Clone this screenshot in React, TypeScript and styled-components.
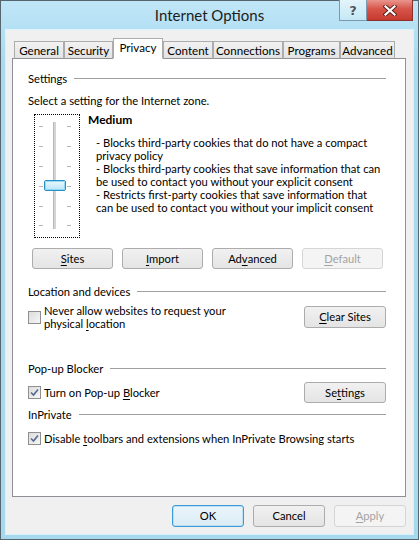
import React from 'react';
import styled, { createGlobalStyle } from 'styled-components';

const Global = createGlobalStyle`
  html, body { margin: 0; padding: 0; background: #fff; }
  body {
    font-family: Lato, "Segoe UI", sans-serif;
    font-size: 11.2px;
    color: #000;
  }
`;

const Window = styled.div`
  box-sizing: border-box;
  width: 419px;
  height: 540px;
  border: 1px solid #55666f;
  background: linear-gradient(#bfe6f7, #a9daf0 60px, #a6d8ee);
  padding: 0 5px 5px 5px;
  display: flex;
  flex-direction: column;
`;

const TitleBar = styled.div`
  height: 29px;
  display: grid;
  grid-template-columns: 1fr auto 1fr;
  align-items: start;
`;

const Title = styled.div`
  grid-column: 2;
  font-size: 15px;
  line-height: 29px;
  color: #1c1c1c;
  white-space: nowrap;
`;

const CaptionButtons = styled.div`
  grid-column: 3;
  justify-self: end;
  display: flex;
  margin-top: -1px;
`;

const CaptionButton = styled.div<{ $close?: boolean }>`
  box-sizing: border-box;
  height: 21px;
  width: ${p => (p.$close ? 46 : 28)}px;
  display: flex;
  align-items: center;
  justify-content: center;
  border: 1px solid ${p => (p.$close ? '#8b3129' : '#7c9aab')};
  border-top: none;
  background: ${p =>
    p.$close
      ? 'linear-gradient(#e9958e, #d65449 45%, #c73b2f)'
      : 'linear-gradient(#e3f4fb, #c4e8f6)'};
  & + & {
    border-left: none;
  }
`;

const HelpGlyph = styled.span`
  font-family: "DejaVu Sans", sans-serif;
  font-weight: bold;
  font-size: 13px;
  line-height: 1;
  color: #4a5560;
  text-shadow: 0 0 1px #fff, 0 0 1px #fff;
`;

const Client = styled.div`
  flex: 1;
  background: #f0f0f0;
  box-shadow: 0 0 0 1px rgba(230, 246, 252, 0.8);
  display: flex;
  flex-direction: column;
  padding: 8px 7px 0 6px;
  min-height: 0;
`;

const TabStrip = styled.div`
  position: relative;
  z-index: 1;
  height: 21px;
  margin-bottom: -1px;
  padding-left: 2px;
  display: flex;
  align-items: flex-end;
`;

const Tab = styled.div<{ $w: number; $active?: boolean }>`
  box-sizing: border-box;
  width: ${p => p.$w}px;
  height: ${p => (p.$active ? 21 : 18)}px;
  border: 1px solid #acacac;
  border-bottom: 1px solid ${p => (p.$active ? '#fff' : '#8e9095')};
  background: ${p => (p.$active ? '#fff' : 'linear-gradient(#f2f2f2, #e3e3e3)')};
  display: flex;
  align-items: center;
  justify-content: center;
  padding-bottom: ${p => (p.$active ? 3 : 0)}px;
  font-size: 11.6px;
  white-space: nowrap;
`;

const Panel = styled.div`
  flex: 1;
  border: 1px solid #8e9095;
  background: #fff;
  padding: 0 19px 0 15px;
  display: flex;
  flex-direction: column;
`;

const SectionHeader = styled.div<{ $mt: number }>`
  margin-top: ${p => p.$mt}px;
  display: flex;
  align-items: center;
  line-height: 15px;
  white-space: nowrap;
  &::after {
    content: '';
    flex: 1;
    height: 1px;
    background: #a0a0a0;
    margin-left: 7px;
  }
`;

const Line = styled.div<{ $mt: number }>`
  margin-top: ${p => p.$mt}px;
  line-height: 15px;
  white-space: nowrap;
`;

const SliderRow = styled.div`
  margin-top: 6px;
  display: flex;
  align-items: flex-start;
`;

const SliderBox = styled.div`
  box-sizing: border-box;
  width: 46px;
  height: 124px;
  margin-left: 6px;
  border: 1px dotted #000;
  display: flex;
`;

const LevelInfo = styled.div`
  margin-left: 8px;
  display: flex;
  flex-direction: column;
`;

const LevelName = styled.div`
  font-weight: bold;
  font-size: 12px;
  line-height: 14px;
  margin-top: -1px;
`;

const Description = styled.div`
  margin-top: 9px;
  margin-left: 8px;
  line-height: 13px;
  white-space: nowrap;
`;

const ButtonRow = styled.div`
  margin-top: 10px;
  margin-left: 4px;
  display: flex;
  gap: 9px;
`;

const Button = styled.div<{ $w: number; $h?: number; $disabled?: boolean; $default?: boolean }>`
  box-sizing: border-box;
  width: ${p => p.$w}px;
  height: ${p => p.$h ?? 21}px;
  border: 1px solid ${p => (p.$disabled ? '#d5d5d5' : p.$default ? '#3c9bd6' : '#acacac')};
  border-radius: 3px;
  background: ${p =>
    p.$disabled ? '#f4f4f4' : p.$default ? 'linear-gradient(#eaf5fb, #dcecf5)' : 'linear-gradient(#f1f1f1, #e4e4e4)'};
  box-shadow: ${p => (p.$default ? 'inset 0 0 0 1px #b9e0f5' : 'none')};
  color: ${p => (p.$disabled ? '#a3a3a3' : '#000')};
  display: flex;
  align-items: center;
  justify-content: center;
  line-height: 14px;
  white-space: nowrap;
  flex-shrink: 0;
`;

const U = styled.span`
  text-decoration: underline;
  text-underline-offset: 2px;
`;

const OptionRow = styled.div<{ $mt: number }>`
  margin-top: ${p => p.$mt}px;
  display: flex;
  align-items: center;
  justify-content: space-between;
`;

const CheckLabel = styled.div`
  display: flex;
  align-items: center;
  gap: 3px;
`;

const CheckText = styled.div`
  line-height: 13px;
  white-space: nowrap;
`;

const Box = styled.span`
  box-sizing: border-box;
  width: 13px;
  height: 13px;
  border: 1px solid #8f8f8f;
  background: linear-gradient(135deg, #dcdcdc, #f6f6f6);
  display: flex;
  align-items: center;
  justify-content: center;
  flex-shrink: 0;
`;

const Footer = styled.div`
  padding: 8px 0 7px;
  display: flex;
  justify-content: flex-end;
  gap: 9px;
`;

const CheckBox = ({ checked }: { checked?: boolean }) => (
  <Box>
    {checked && (
      <svg width="9" height="9" viewBox="0 0 9 9">
        <path d="M1 4.5 L3.5 7 L8 1.5" fill="none" stroke="#55688f" strokeWidth="1.6" />
      </svg>
    )}
  </Box>
);

const Slider = () => {
  const ticks = [11, 31, 51, 71, 91, 110];
  return (
    <svg width="44" height="122" viewBox="0 0 44 122">
      <rect x="18" y="7" width="3" height="107" fill="#d4d4d4" />
      <rect x="18" y="7" width="1" height="107" fill="#b9b9b9" />
      {ticks.map(y => (
        <g key={y}>
          <rect x="4" y={y} width="4" height="1" fill="#b8b8b8" />
          <rect x="32" y={y} width="4" height="1" fill="#b8b8b8" />
        </g>
      ))}
      <defs>
        <linearGradient id="thumb" x1="0" y1="0" x2="0" y2="1">
          <stop offset="0" stopColor="#eefaff" />
          <stop offset="1" stopColor="#b6e4f6" />
        </linearGradient>
      </defs>
      <rect x="9.5" y="65.5" width="21" height="10" rx="1.5" fill="url(#thumb)" stroke="#2c8fc4" />
      <rect x="10.5" y="66.5" width="19" height="8" rx="1" fill="none" stroke="#7fd3f2" strokeWidth="0.8" />
    </svg>
  );
};

const CloseX = () => (
  <svg width="14" height="11" viewBox="0 0 14 11">
    <path d="M2.5 1.5 L11.5 9.5 M11.5 1.5 L2.5 9.5" stroke="#5a1f1a" strokeWidth="4" strokeLinecap="square" />
    <path d="M2.5 1.5 L11.5 9.5 M11.5 1.5 L2.5 9.5" stroke="#fff" strokeWidth="2.2" strokeLinecap="square" />
  </svg>
);

const tabs: { label: string; w: number; active?: boolean }[] = [
  { label: 'General', w: 50 },
  { label: 'Security', w: 49 },
  { label: 'Privacy', w: 50, active: true },
  { label: 'Content', w: 50 },
  { label: 'Connections', w: 70 },
  { label: 'Programs', w: 57 },
  { label: 'Advanced', w: 55 },
];

export default function App() {
  return (
    <>
      <Global />
      <Window>
        <TitleBar>
          <Title>Internet Options</Title>
          <CaptionButtons>
            <CaptionButton>
              <HelpGlyph>?</HelpGlyph>
            </CaptionButton>
            <CaptionButton $close>
              <CloseX />
            </CaptionButton>
          </CaptionButtons>
        </TitleBar>
        <Client>
          <TabStrip>
            {tabs.map(t => (
              <Tab key={t.label} $w={t.w} $active={t.active}>
                {t.label}
              </Tab>
            ))}
          </TabStrip>
          <Panel>
            <SectionHeader $mt={12}>Settings</SectionHeader>
            <Line $mt={7}>Select a setting for the Internet zone.</Line>
            <SliderRow>
              <SliderBox>
                <Slider />
              </SliderBox>
              <LevelInfo>
                <LevelName>Medium</LevelName>
                <Description>
                  - Blocks third-party cookies that do not have a compact
                  <br />
                  privacy policy
                  <br />
                  - Blocks third-party cookies that save information that can
                  <br />
                  be used to contact you without your explicit consent
                  <br />
                  - Restricts first-party cookies that save information that
                  <br />
                  can be used to contact you without your implicit consent
                </Description>
              </LevelInfo>
            </SliderRow>
            <ButtonRow>
              <Button $w={81}>
                <U>S</U>ites
              </Button>
              <Button $w={81}>
                <U>I</U>mport
              </Button>
              <Button $w={81}>
                Ad<U>v</U>anced
              </Button>
              <Button $w={81} $disabled>
                <U>D</U>efault
              </Button>
            </ButtonRow>
            <SectionHeader $mt={15}>Location and devices</SectionHeader>
            <OptionRow $mt={5}>
              <CheckLabel>
                <CheckBox />
                <CheckText>
                  Never allow websites to request your
                  <br />
                  physical <U>l</U>ocation
                </CheckText>
              </CheckLabel>
              <Button $w={82} $h={22}>
                <U>C</U>lear Sites
              </Button>
            </OptionRow>
            <SectionHeader $mt={31}>Pop-up Blocker</SectionHeader>
            <OptionRow $mt={6}>
              <CheckLabel>
                <CheckBox checked />
                <CheckText>
                  Turn on Pop-up <U>B</U>locker
                </CheckText>
              </CheckLabel>
              <Button $w={82}>
                Se<U>t</U>tings
              </Button>
            </OptionRow>
            <SectionHeader $mt={4}>InPrivate</SectionHeader>
            <OptionRow $mt={10}>
              <CheckLabel>
                <CheckBox checked />
                <CheckText>
                  Disable <U>t</U>oolbars and extensions when InPrivate Browsing starts
                </CheckText>
              </CheckLabel>
            </OptionRow>
          </Panel>
          <Footer>
            <Button $w={72} $h={22} $default>
              OK
            </Button>
            <Button $w={72} $h={22}>
              Cancel
            </Button>
            <Button $w={72} $h={22} $disabled>
              <U>A</U>pply
            </Button>
          </Footer>
        </Client>
      </Window>
    </>
  );
}
